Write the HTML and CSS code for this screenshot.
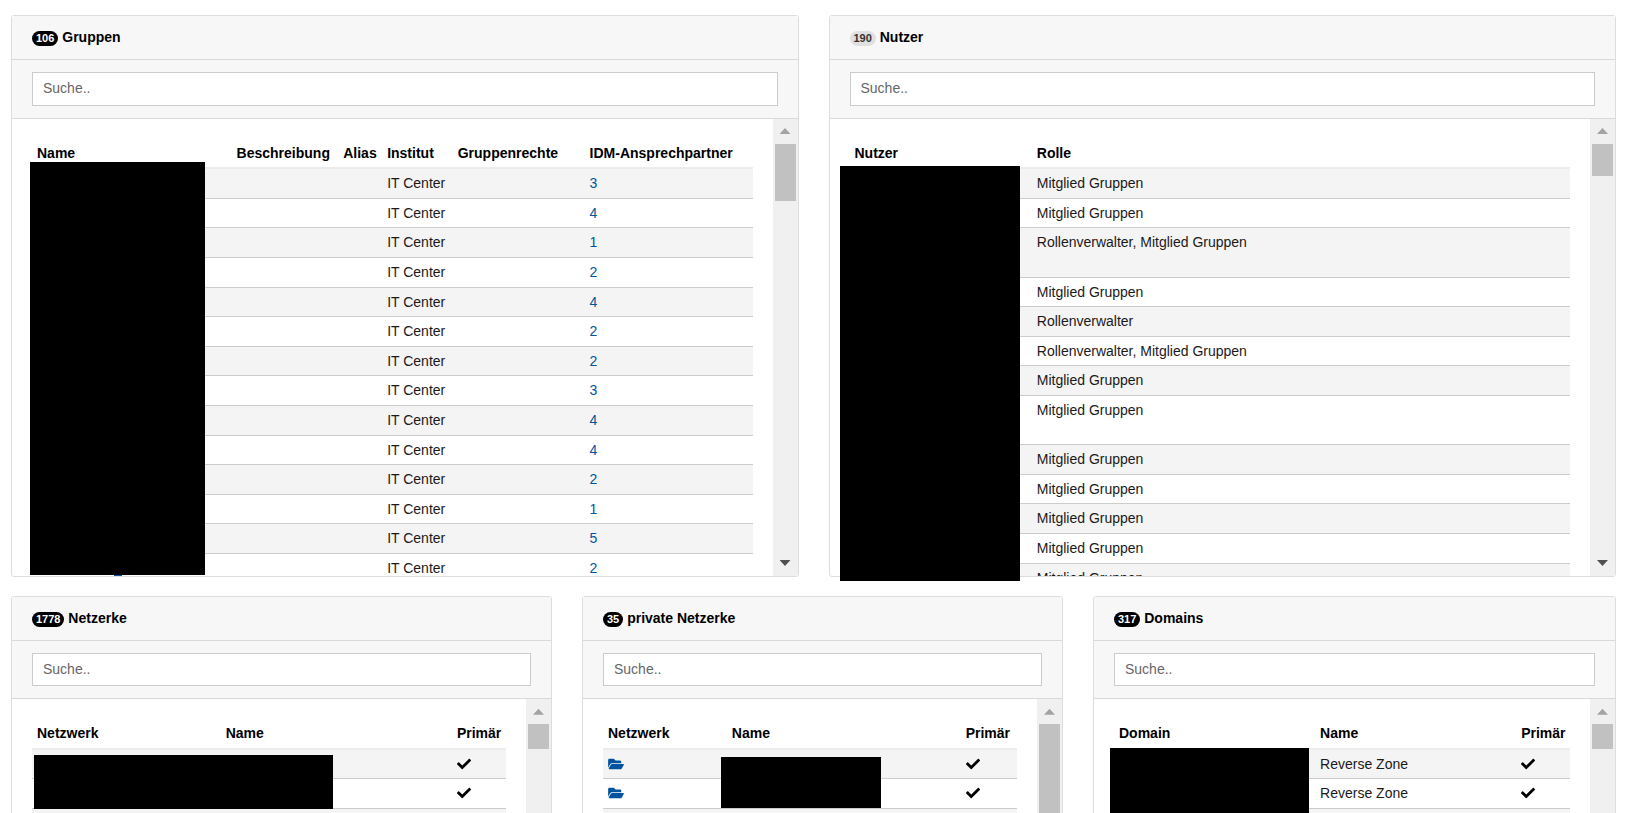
FILE: index.html
```html
<!DOCTYPE html>
<html lang="de">
<head>
<meta charset="utf-8">
<title>Übersicht</title>
<link rel="stylesheet" href="styles.css">
</head>
<body>
<svg class="symbols" aria-hidden="true">
  <symbol id="check" viewBox="0 0 512 512"><path d="M173.898 439.404l-166.4-166.4c-9.997-9.997-9.997-26.206 0-36.204l36.203-36.204c9.997-9.998 26.207-9.998 36.204 0L192 312.69 432.095 72.596c9.997-9.997 26.207-9.997 36.204 0l36.203 36.204c9.997 9.997 9.997 26.206 0 36.204l-294.4 294.401c-9.998 9.997-26.207 9.997-36.204-.001z"/></symbol>
  <symbol id="folder" viewBox="0 0 576 512"><path d="M572.694 292.093L500.27 416.248A63.997 63.997 0 0 1 444.989 448H45.025c-18.523 0-30.064-20.093-20.731-36.093l72.424-124.155A64 64 0 0 1 152 256h399.964c18.523 0 30.064 20.093 20.73 36.093zM152 224h328v-48c0-26.51-21.49-48-48-48H272l-64-64H48C21.49 64 0 85.49 0 112v278.046l69.077-118.418C86.214 242.25 117.989 224 152 224z"/></symbol>
</svg>
<main class="page">
  <div class="row row-two">
    <section class="panel">
      <h2 class="panel-title"><span class="badge">106</span> Gruppen</h2>
      <div class="panel-search"><input class="search" type="text" placeholder="Suche.." aria-label="Gruppen suchen"></div>
      <div class="panel-body">
        <div class="panel-content">
          <table class="table groups">
            <thead><tr><th>Name</th><th>Beschreibung</th><th>Alias</th><th>Institut</th><th>Gruppenrechte</th><th>IDM-Ansprechpartner</th></tr></thead>
            <tbody>
              <tr><td></td><td></td><td></td><td>IT Center</td><td></td><td><a href="#">3</a></td></tr>
              <tr><td></td><td></td><td></td><td>IT Center</td><td></td><td><a href="#">4</a></td></tr>
              <tr><td></td><td></td><td></td><td>IT Center</td><td></td><td><a href="#">1</a></td></tr>
              <tr><td></td><td></td><td></td><td>IT Center</td><td></td><td><a href="#">2</a></td></tr>
              <tr><td></td><td></td><td></td><td>IT Center</td><td></td><td><a href="#">4</a></td></tr>
              <tr><td></td><td></td><td></td><td>IT Center</td><td></td><td><a href="#">2</a></td></tr>
              <tr><td></td><td></td><td></td><td>IT Center</td><td></td><td><a href="#">2</a></td></tr>
              <tr><td></td><td></td><td></td><td>IT Center</td><td></td><td><a href="#">3</a></td></tr>
              <tr><td></td><td></td><td></td><td>IT Center</td><td></td><td><a href="#">4</a></td></tr>
              <tr><td></td><td></td><td></td><td>IT Center</td><td></td><td><a href="#">4</a></td></tr>
              <tr><td></td><td></td><td></td><td>IT Center</td><td></td><td><a href="#">2</a></td></tr>
              <tr><td></td><td></td><td></td><td>IT Center</td><td></td><td><a href="#">1</a></td></tr>
              <tr><td></td><td></td><td></td><td>IT Center</td><td></td><td><a href="#">5</a></td></tr>
              <tr><td></td><td></td><td></td><td>IT Center</td><td></td><td><a href="#">2</a></td></tr>
            </tbody>
          </table>
        </div>
        <div class="scrollbar"><i class="arrow arrow-up"></i><i class="thumb thumb-medium"></i><i class="arrow arrow-down"></i></div>
      </div>
      <div class="mask mask-groups"></div>
      <div class="link-edge"></div>
    </section>

    <section class="panel">
      <h2 class="panel-title"><span class="badge badge-light">190</span> Nutzer</h2>
      <div class="panel-search"><input class="search" type="text" placeholder="Suche.." aria-label="Nutzer suchen"></div>
      <div class="panel-body">
        <div class="panel-content">
          <table class="table users">
            <thead><tr><th>Nutzer</th><th>Rolle</th></tr></thead>
            <tbody>
              <tr><td></td><td>Mitglied Gruppen</td></tr>
              <tr><td></td><td>Mitglied Gruppen</td></tr>
              <tr><td>&nbsp;<br>&nbsp;</td><td>Rollenverwalter, Mitglied Gruppen</td></tr>
              <tr><td></td><td>Mitglied Gruppen</td></tr>
              <tr><td></td><td>Rollenverwalter</td></tr>
              <tr><td></td><td>Rollenverwalter, Mitglied Gruppen</td></tr>
              <tr><td></td><td>Mitglied Gruppen</td></tr>
              <tr><td>&nbsp;<br>&nbsp;</td><td>Mitglied Gruppen</td></tr>
              <tr><td></td><td>Mitglied Gruppen</td></tr>
              <tr><td></td><td>Mitglied Gruppen</td></tr>
              <tr><td></td><td>Mitglied Gruppen</td></tr>
              <tr><td></td><td>Mitglied Gruppen</td></tr>
              <tr><td></td><td>Mitglied Gruppen</td></tr>
            </tbody>
          </table>
        </div>
        <div class="scrollbar"><i class="arrow arrow-up"></i><i class="thumb thumb-small"></i><i class="arrow arrow-down"></i></div>
      </div>
      <div class="mask mask-users"></div>
    </section>
  </div>

  <div class="row row-three">
    <section class="panel">
      <h2 class="panel-title"><span class="badge">1778</span> Netzerke</h2>
      <div class="panel-search"><input class="search" type="text" placeholder="Suche.." aria-label="Netzwerke suchen"></div>
      <div class="panel-body">
        <div class="panel-content">
          <table class="table networks">
            <thead><tr><th>Netzwerk</th><th>Name</th><th>Primär</th></tr></thead>
            <tbody>
              <tr><td></td><td></td><td><svg class="icon"><use href="#check"/></svg></td></tr>
              <tr><td></td><td></td><td><svg class="icon"><use href="#check"/></svg></td></tr>
              <tr><td></td><td></td><td></td></tr>
            </tbody>
          </table>
        </div>
        <div class="scrollbar"><i class="arrow arrow-up"></i><i class="thumb"></i><i class="arrow arrow-down"></i></div>
      </div>
      <div class="mask mask-networks"></div>
    </section>

    <section class="panel">
      <h2 class="panel-title"><span class="badge">35</span> private Netzerke</h2>
      <div class="panel-search"><input class="search" type="text" placeholder="Suche.." aria-label="Private Netzwerke suchen"></div>
      <div class="panel-body">
        <div class="panel-content">
          <table class="table private">
            <thead><tr><th>Netzwerk</th><th>Name</th><th>Primär</th></tr></thead>
            <tbody>
              <tr><td><a href="#" aria-label="Öffnen"><svg class="icon icon-wide"><use href="#folder"/></svg></a></td><td></td><td><svg class="icon"><use href="#check"/></svg></td></tr>
              <tr><td><a href="#" aria-label="Öffnen"><svg class="icon icon-wide"><use href="#folder"/></svg></a></td><td></td><td><svg class="icon"><use href="#check"/></svg></td></tr>
              <tr><td></td><td></td><td></td></tr>
            </tbody>
          </table>
        </div>
        <div class="scrollbar"><i class="arrow arrow-up"></i><i class="thumb thumb-large"></i><i class="arrow arrow-down"></i></div>
      </div>
      <div class="mask mask-private"></div>
    </section>

    <section class="panel">
      <h2 class="panel-title"><span class="badge">317</span> Domains</h2>
      <div class="panel-search"><input class="search" type="text" placeholder="Suche.." aria-label="Domains suchen"></div>
      <div class="panel-body">
        <div class="panel-content">
          <table class="table domains">
            <thead><tr><th>Domain</th><th>Name</th><th>Primär</th></tr></thead>
            <tbody>
              <tr><td></td><td>Reverse Zone</td><td><svg class="icon"><use href="#check"/></svg></td></tr>
              <tr><td></td><td>Reverse Zone</td><td><svg class="icon"><use href="#check"/></svg></td></tr>
              <tr><td></td><td></td><td></td></tr>
            </tbody>
          </table>
        </div>
        <div class="scrollbar"><i class="arrow arrow-up"></i><i class="thumb"></i><i class="arrow arrow-down"></i></div>
      </div>
      <div class="mask mask-domains"></div>
    </section>
  </div>
</main>
</body>
</html>
```
FILE: styles.css
```css
* { box-sizing: border-box; }

body {
  margin: 0;
  background: #fff;
  color: #000;
  font: 14px/1.4 "Liberation Sans", Arial, sans-serif;
}

.symbols { display: none; }

.page {
  height: 100vh;
  overflow: hidden;
  padding: 15px 15px 0 11px;
  display: flex;
  flex-direction: column;
  gap: 19px;
}

.row { display: grid; column-gap: 30px; flex: none; }
.row-two { grid-template-columns: 1fr 1fr; }
.row-three { grid-template-columns: 541fr 481fr 523fr; }

.panel {
  position: relative;
  min-width: 0;
  border: 1px solid #ddd;
  border-radius: 3px;
  background: #fff;
}

.panel-title {
  margin: 0;
  padding: 12px 20px;
  background: #f7f7f7;
  border-bottom: 1px solid #d9d9d9;
  font-size: 14px;
  line-height: 19px;
  font-weight: bold;
}

.badge {
  display: inline-block;
  padding: 0 4px;
  border-radius: 8px;
  background: #000;
  color: #fff;
  font-size: 11px;
  line-height: 15px;
}
.badge-light { background: #e0e0e0; color: #333; }

.panel-search {
  padding: 12px 20px;
  background: #f7f7f7;
  border-bottom: 1px solid #d9d9d9;
}

.search {
  display: block;
  width: 100%;
  padding: 6px 10px;
  border: 1px solid #ccc;
  border-radius: 0;
  background: #fff;
  color: #000;
  font: inherit;
}
.search::placeholder { color: #666; opacity: 1; }

.panel-body { display: flex; height: 457px; overflow: hidden; }
.panel-content { flex: 1; min-width: 0; padding: 20px; }

.table {
  width: 100%;
  table-layout: fixed;
  border-collapse: separate;
  border-spacing: 0;
}
.table th {
  padding: 5px 5px 4px;
  border-bottom: 2px solid #ececec;
  text-align: left;
  white-space: nowrap;
}
.table td {
  padding: 5px 5px 4px;
  border-bottom: 1px solid #ccc;
  vertical-align: top;
  color: #1a1a1a;
}
.table td:empty::before { content: "\a0"; }
.table tbody tr:nth-child(odd) { background: #f4f4f4; }
.table a { color: #00549f; text-decoration: none; }

.groups th:nth-child(1) { width: 27.7%; }
.groups th:nth-child(2) { width: 14.8%; }
.groups th:nth-child(3) { width: 6.1%; }
.groups th:nth-child(4) { width: 9.8%; }
.groups th:nth-child(5) { width: 18.3%; }
.users th:nth-child(1) { width: 25.3%; }
.networks th:nth-child(1) { width: 39.8%; }
.networks th:nth-child(2) { width: 48.8%; }
.private th:nth-child(1) { width: 29.9%; }
.private th:nth-child(2) { width: 56.5%; }
.domains th:nth-child(1),
.domains th:nth-child(2) { width: 44.1%; }

.icon {
  width: 14px;
  height: 14px;
  fill: currentColor;
  vertical-align: -2px;
}
.icon-wide { width: 16px; }
td > .icon { color: #000; }

.scrollbar {
  flex: none;
  width: 25px;
  display: flex;
  flex-direction: column;
  background: #f0f0f0;
}
.arrow { height: 25px; display: flex; align-items: center; justify-content: center; }
.arrow::before { content: ""; width: 11px; height: 6px; background: #a3a3a3; }
.arrow-up::before { clip-path: polygon(50% 0, 100% 100%, 0 100%); }
.arrow-down { margin-top: auto; }
.arrow-down::before { clip-path: polygon(0 0, 100% 0, 50% 100%); background: #505050; }
.thumb { height: 25px; margin: 0 2px; background: #c1c1c1; }
.thumb-small { height: 32px; }
.thumb-medium { height: 57px; }
.thumb-large { height: 200px; }

/* Blacked-out areas over personal data */
.mask { position: absolute; background: #000; }
.mask-groups { left: 18px; top: 146px; width: 175px; height: 413px; }
.mask-users { left: 10px; top: 150px; width: 180px; height: 415px; }
.mask-networks { left: 22px; top: 158px; width: 299px; height: 54px; }
.mask-private { left: 138px; top: 160px; width: 160px; height: 51px; }
.mask-domains { left: 16px; top: 151px; width: 199px; height: 90px; }
.link-edge { position: absolute; left: 102px; top: 559px; width: 8px; height: 1px; background: #00549f; }
```
